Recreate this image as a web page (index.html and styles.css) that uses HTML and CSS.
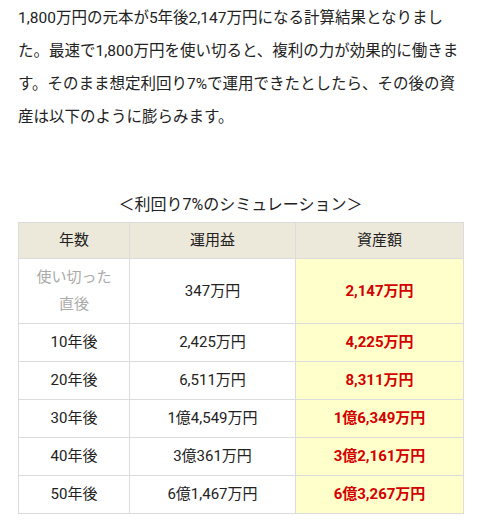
FILE: index.html
```html
<!DOCTYPE html>
<html lang="ja">
<head>
<meta charset="utf-8">
<link rel="stylesheet" href="styles.css">
</head>
<body>
<div class="content">
<p class="lead">1,800万円の元本が5年後2,147万円になる計算結果となりました。最速で1,800万円を使い切ると、複利の力が効果的に働きます。そのまま想定利回り7%で運用できたとしたら、その後の資産は以下のように膨らみます。</p>
<p class="caption">＜利回り7%のシミュレーション＞</p>
<table class="sim">
<colgroup><col class="c1"><col class="c2"><col class="c3"></colgroup>
<thead>
<tr><th>年数</th><th>運用益</th><th>資産額</th></tr>
</thead>
<tbody>
<tr><td class="muted">使い切った<br>直後</td><td>347万円</td><td class="hl">2,147万円</td></tr>
<tr><td>10年後</td><td>2,425万円</td><td class="hl">4,225万円</td></tr>
<tr><td>20年後</td><td>6,511万円</td><td class="hl">8,311万円</td></tr>
<tr><td>30年後</td><td>1億4,549万円</td><td class="hl">1億6,349万円</td></tr>
<tr><td>40年後</td><td>3億361万円</td><td class="hl">3億2,161万円</td></tr>
<tr><td>50年後</td><td>6億1,467万円</td><td class="hl">6億3,267万円</td></tr>
</tbody>
</table>
</div>
</body>
</html>
```
FILE: styles.css
```css
html, body {
  margin: 0;
  padding: 0;
  background: #fff;
}
body {
  font-family: Roboto, "Noto Sans CJK JP", sans-serif;
  color: #222;
}
.content {
  padding: 2px 17px 0 18px;
}
.lead {
  margin: 0;
  font-size: 15.5px;
  line-height: 33px;
  color: #222;
}
.caption {
  margin: 54px 0 0;
  text-align: center;
  font-size: 16px;
  line-height: 34px;
  color: #222;
}
.sim {
  width: 445px;
  border-collapse: collapse;
  table-layout: fixed;
  font-size: 15px;
  color: #222;
}
.sim .c1 { width: 111px; }
.sim .c2 { width: 166px; }
.sim .c3 { width: 168px; }
.sim th, .sim td {
  border: 1px solid #dcdcdc;
  text-align: center;
  line-height: 27px;
  padding: 5px 4px;
}
.sim th {
  background: #ede9da;
  font-weight: normal;
  padding: 4px 4px;
}
.sim td.muted {
  color: #aaa;
}
.sim td.hl {
  background: #ffffcc;
  color: #d40000;
  font-weight: bold;
}
```
